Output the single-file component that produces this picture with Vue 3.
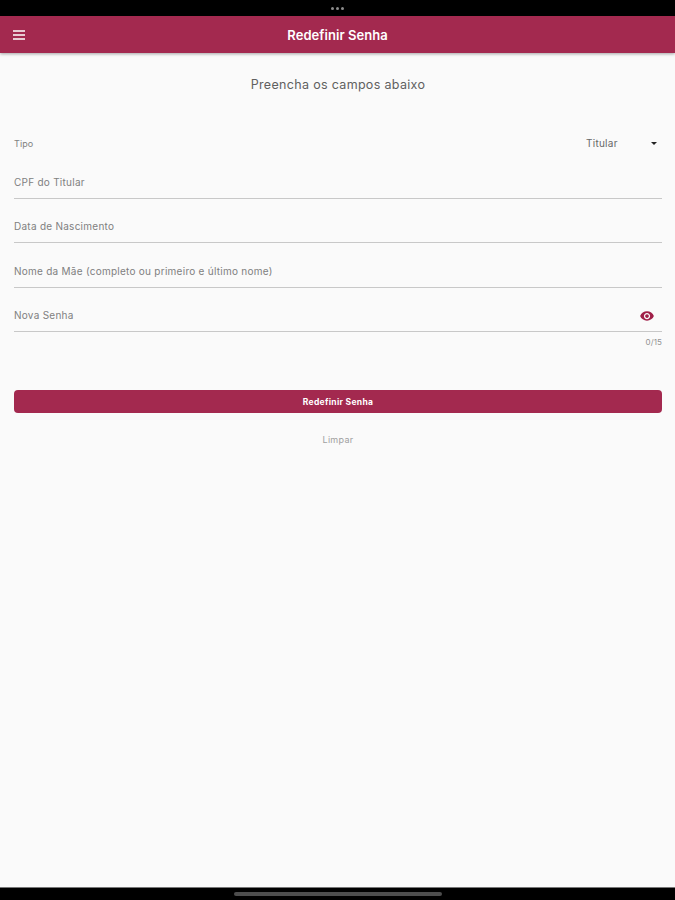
<template>
  <div class="screen">
    <div class="status-bar">
      <span class="dot" />
      <span class="dot" />
      <span class="dot" />
    </div>

    <header class="app-bar">
      <button class="menu-button" aria-label="Menu">
        <svg viewBox="0 0 12 10" width="12" height="10">
          <path d="M0 1h12M0 5h12M0 9h12" stroke="#fff" stroke-width="1.5" />
        </svg>
      </button>
      <h1>Redefinir Senha</h1>
    </header>

    <main class="content">
      <h2>Preencha os campos abaixo</h2>

      <div class="type-row">
        <span class="type-label">Tipo</span>
        <button class="type-select">
          <span>{{ tipo }}</span>
          <svg viewBox="0 0 6 3" width="6" height="3">
            <path d="M0 0h6L3 3z" fill="#222" />
          </svg>
        </button>
      </div>

      <div v-for="field in fields" :key="field.name" class="field" :class="field.name">
        <input
          v-model="form[field.name]"
          :type="field.name === 'senha' && !showPassword ? 'password' : 'text'"
          :placeholder="field.label"
          :maxlength="field.max"
        />
        <button
          v-if="field.name === 'senha'"
          class="eye-button"
          aria-label="Senha"
          @click="showPassword = !showPassword"
        >
          <svg viewBox="1 4 22 16" width="14" height="10">
            <path
              fill="#a01f48"
              d="M12 4.5C7 4.5 2.73 7.61 1 12c1.73 4.39 6 7.5 11 7.5s9.27-3.11 11-7.5c-1.73-4.39-6-7.5-11-7.5zM12 17c-2.76 0-5-2.24-5-5s2.24-5 5-5 5 2.24 5 5-2.24 5-5 5zm0-8c-1.66 0-3 1.34-3 3s1.34 3 3 3 3-1.34 3-3-1.34-3-3-3z"
            />
          </svg>
        </button>
      </div>

      <div class="counter">{{ form.senha.length }}/15</div>

      <button class="submit-button">Redefinir Senha</button>
      <button class="clear-button" @click="clear">Limpar</button>
    </main>

    <footer class="home-bar">
      <span class="home-indicator" />
    </footer>
  </div>
</template>

<script setup>
import { reactive, ref } from 'vue'

const tipo = ref('Titular')
const showPassword = ref(false)

const fields = [
  { name: 'cpf', label: 'CPF do Titular' },
  { name: 'nascimento', label: 'Data de Nascimento' },
  { name: 'mae', label: 'Nome da Mãe (completo ou primeiro e último nome)' },
  { name: 'senha', label: 'Nova Senha', max: 15 },
]

const form = reactive({ cpf: '', nascimento: '', mae: '', senha: '' })

const clear = () => {
  Object.keys(form).forEach((key) => {
    form[key] = ''
  })
}
</script>

<style>
body {
  margin: 0;
  background: #fafafa;
}
</style>

<style scoped>
.screen {
  height: 100vh;

  display: flex;
  flex-direction: column;

  background: #fafafa;
  color: #808080;

  font-family: Inter, 'Liberation Sans', sans-serif;
  font-size: 10px;
  letter-spacing: 0.26px;

  overflow: hidden;
}

button,
input {
  padding: 0;
  border: none;
  outline: none;

  background: none;
  color: inherit;

  font: inherit;
  letter-spacing: inherit;
}

button {
  cursor: pointer;
}

svg {
  display: block;
}

.status-bar {
  flex: none;
  box-sizing: border-box;
  height: 16px;
  padding-top: 1px;

  display: flex;
  align-items: center;
  justify-content: center;
  gap: 2px;

  background: #000;
}

.dot {
  width: 3px;
  height: 3px;

  border-radius: 50%;

  background: #8c8c8c;
}

.app-bar {
  flex: none;
  height: 37px;
  padding: 0 13px;

  display: grid;
  grid-template-columns: 12px 1fr 12px;
  align-items: center;

  background: #a3294f;
  box-shadow: 0 1px 3px rgba(0, 0, 0, 0.35);
  color: #fff;
}

.app-bar h1 {
  margin: 0;

  font-size: 13px;
  font-weight: 600;
  line-height: 16px;
  letter-spacing: 0.05px;
  text-align: center;
}

.content {
  flex: 1;
  padding: 0 13px 0 14px;

  display: flex;
  flex-direction: column;
}

.content h2 {
  margin: 24px 0 0;

  color: #606060;

  font-size: 12.5px;
  font-weight: 400;
  line-height: 16px;
  letter-spacing: 0.32px;
  text-align: center;
}

.type-row {
  height: 16px;
  margin: 42px 0 1px;
  padding-right: 5px;

  display: flex;
  align-items: center;
  justify-content: space-between;
}

.type-label {
  font-size: 9px;
  letter-spacing: 0.1px;
}

.type-select {
  width: 71px;

  display: flex;
  align-items: center;
  justify-content: space-between;

  color: #686868;
}

.field {
  box-sizing: border-box;
  height: 44px;
  padding-bottom: 8px;

  display: flex;
  align-items: flex-end;

  border-bottom: 1px solid #c8c8c8;
}

.field.cpf {
  height: 47px;
}

.field.mae {
  height: 45px;
}

.field input {
  flex: 1;
  height: 16px;
}

.field input::placeholder {
  color: #808080;
  opacity: 1;
}

.eye-button {
  margin: 0 8.5px 2px 0;
}

.counter {
  margin-top: 5px;

  color: #929292;

  font-size: 8px;
  line-height: 10px;
  letter-spacing: 0.1px;
  text-align: right;
}

.submit-button {
  height: 23px;
  margin-top: 43px;

  border-radius: 4px;

  background: #a3294f;
  color: #fff;

  font-size: 8.5px;
  font-weight: 700;
  letter-spacing: 0.3px;
}

.clear-button {
  height: 16px;
  margin-top: 18px;
  align-self: center;

  color: #a0a0a0;

  font-size: 9px;
  letter-spacing: 0.3px;
}

.home-bar {
  flex: none;
  height: 12px;

  display: flex;
  align-items: center;
  justify-content: center;

  border-top: 1px solid #777;
  background: #000;
}

.home-indicator {
  width: 208px;
  height: 4px;

  border-radius: 2px;

  background: #4d4d4d;
}
</style>
